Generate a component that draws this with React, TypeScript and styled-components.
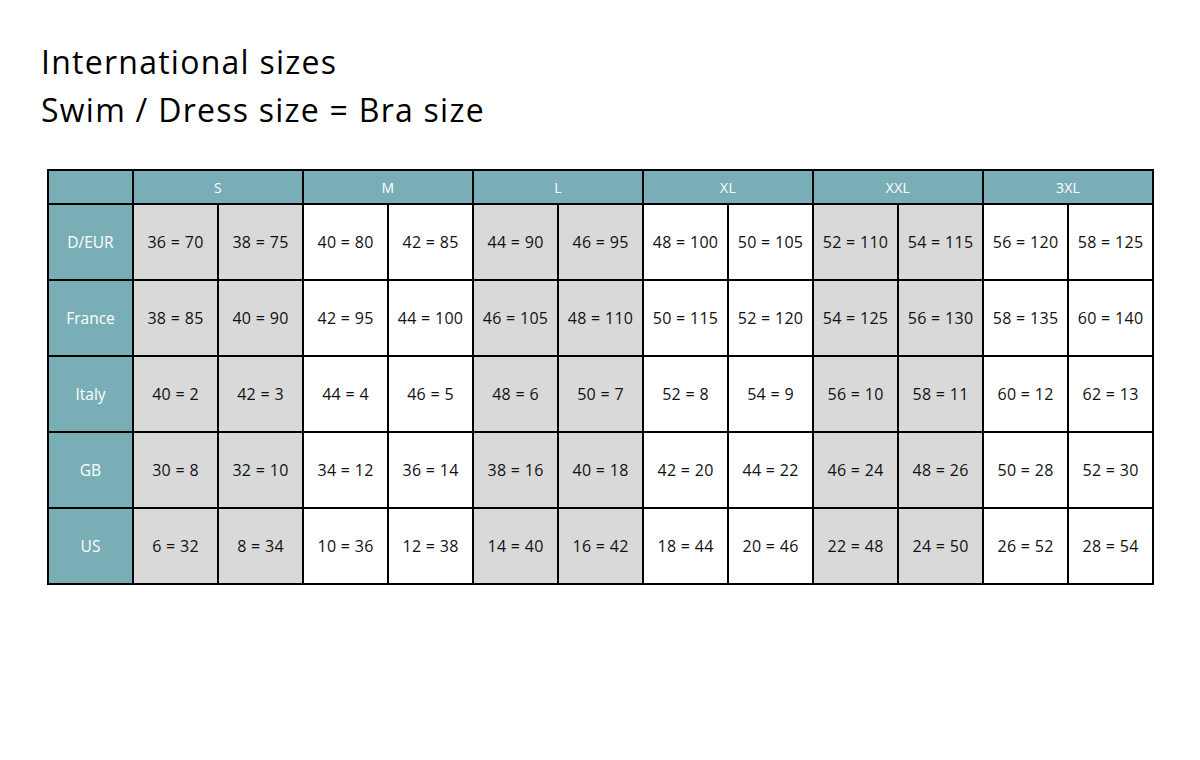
import React from 'react';
import styled, { createGlobalStyle } from 'styled-components';

const GlobalStyle = createGlobalStyle`
  body {
    margin: 0;
    background: #ffffff;
    font-family: 'Open Sans', 'Liberation Sans', sans-serif;
  }
`;

const TEAL = '#79aeb7';
const GREY = '#d9d9d9';

const Page = styled.div`
  width: 1200px;
  height: 760px;
  padding: 38px 0 0 41px;
  box-sizing: border-box;
`;

const Title = styled.h1`
  margin: 0;
  font-family: 'Open Sans', sans-serif;
  font-weight: 400;
  font-size: 32px;
  line-height: 48px;
  color: #000000;
  letter-spacing: 1.25px;
`;

const Table = styled.table`
  margin: 35px 0 0 6px;
  border-collapse: collapse;
  table-layout: fixed;
  width: 1105px;
  border: 2px solid #000000;
  font-family: 'Open Sans', sans-serif;
`;

const HeadCell = styled.th`
  background: ${TEAL};
  color: #ffffff;
  font-weight: 400;
  font-size: 14px;
  letter-spacing: 0.3px;
  height: 32px;
  padding: 0;
  border: 2px solid #000000;
  text-align: center;
`;

const RowLabel = styled.th`
  background: ${TEAL};
  color: #ffffff;
  font-weight: 400;
  font-size: 15.5px;
  height: 74px;
  padding: 0;
  border: 2px solid #000000;
  text-align: center;
`;

const Cell = styled.td<{ $shaded: boolean }>`
  background: ${(p) => (p.$shaded ? GREY : '#ffffff')};
  color: #111111;
  font-size: 16px;
  letter-spacing: 0.3px;
  padding: 0;
  border: 2px solid #000000;
  text-align: center;
  white-space: nowrap;
`;

const sizes = ['S', 'M', 'L', 'XL', 'XXL', '3XL'];

const rows: { label: string; values: string[] }[] = [
  {
    label: 'D/EUR',
    values: ['36 = 70', '38 = 75', '40 = 80', '42 = 85', '44 = 90', '46 = 95', '48 = 100', '50 = 105', '52 = 110', '54 = 115', '56 = 120', '58 = 125'],
  },
  {
    label: 'France',
    values: ['38 = 85', '40 = 90', '42 = 95', '44 = 100', '46 = 105', '48 = 110', '50 = 115', '52 = 120', '54 = 125', '56 = 130', '58 = 135', '60 = 140'],
  },
  {
    label: 'Italy',
    values: ['40 = 2', '42 = 3', '44 = 4', '46 = 5', '48 = 6', '50 = 7', '52 = 8', '54 = 9', '56 = 10', '58 = 11', '60 = 12', '62 = 13'],
  },
  {
    label: 'GB',
    values: ['30 = 8', '32 = 10', '34 = 12', '36 = 14', '38 = 16', '40 = 18', '42 = 20', '44 = 22', '46 = 24', '48 = 26', '50 = 28', '52 = 30'],
  },
  {
    label: 'US',
    values: ['6 = 32', '8 = 34', '10 = 36', '12 = 38', '14 = 40', '16 = 42', '18 = 44', '20 = 46', '22 = 48', '24 = 50', '26 = 52', '28 = 54'],
  },
];

const App = function () {
  return (
    <Page>
      <GlobalStyle />
      <Title>International sizes</Title>
      <Title>Swim / Dress size = Bra size</Title>
      <Table>
        <colgroup>
          <col style={{ width: 85 }} />
          {Array.from({ length: 12 }).map((_, i) => (
            <col key={i} style={{ width: 85 }} />
          ))}
        </colgroup>
        <thead>
          <tr>
            <HeadCell />
            {sizes.map((s) => (
              <HeadCell key={s} colSpan={2}>{s}</HeadCell>
            ))}
          </tr>
        </thead>
        <tbody>
          {rows.map((row) => (
            <tr key={row.label}>
              <RowLabel>{row.label}</RowLabel>
              {row.values.map((v, i) => (
                <Cell key={v + i} $shaded={Math.floor(i / 2) % 2 === 0}>{v}</Cell>
              ))}
            </tr>
          ))}
        </tbody>
      </Table>
    </Page>
  );
};

export default App;
